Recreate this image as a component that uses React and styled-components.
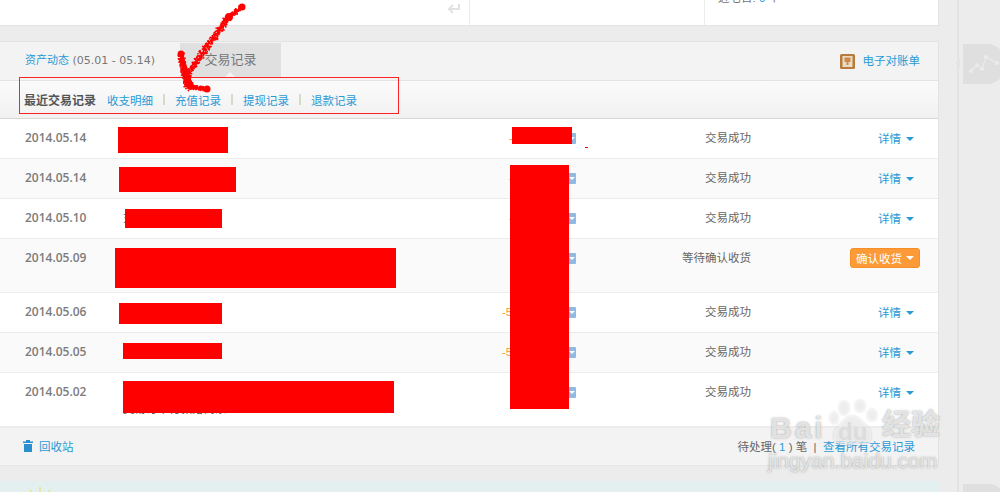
import React from 'react'
import styled, { createGlobalStyle } from 'styled-components'

const Global = createGlobalStyle`
html, body { margin: 0; padding: 0; background: #ececec; }
body { font: 11.5px "Liberation Sans", "Noto Sans CJK SC", sans-serif; color: #666; }
`
const Page = styled.div`
position: relative;
width: 1000px;
height: 492px;
overflow: hidden;
display: flex;
`
const Main = styled.div`
width: 939px;
flex: none;
display: flex;
flex-direction: column;
`
const Rail = styled.div`
position: relative;
margin-left: 18px;
flex: 1;
border-left: 2px solid #e3e3e3;
`
const RailTab = styled.div`
position: absolute;
left: 4px;
top: 44px;
width: 42px;
height: 40px;
background: #dfdfdf;
border-radius: 0 18px 18px 0;
&::before {
  content: "";
  position: absolute;
  left: -8px;
  top: 14px;
  border: 5px solid transparent;
  border-left: 0;
  border-right: 5px solid #e4e4e4;
}
`
const RailChart = styled.svg`
display: block;
margin-top: 8px;
`
const RailTabLow = styled.div`
position: absolute;
left: 4px;
top: 484px;
width: 40px;
height: 40px;
background: #dfdfdf;
border-radius: 0 14px 0 0;
`
const TopCard = styled.div`
height: 25px;
flex: none;
background: #fff;
border-bottom: 1px solid #e3e3e3;
border-right: 1px solid #e3e3e3;
display: flex;
overflow: hidden;
`
const TopCell = styled.div`
width: ${p => p.$w}px;
flex: none;
box-sizing: border-box;
display: flex;
justify-content: ${p => p.$end ? 'flex-end' : 'flex-start'};
padding: ${p => p.$end ? '3px 8px 0 0' : '0'};
border-right: ${p => p.$line ? '1px solid #ececec' : 'none'};
`
const ClippedNote = styled.div`
margin: -10px 0 0 13px;
line-height: 16px;
color: #777;
`
const Blue = styled.span`
color: #2a9ad6;
`
const Ledger = styled.div`
margin-top: 15px;
border-top: 1px solid #e3e3e3;
border-right: 1px solid #e3e3e3;
background: #fff;
`
const TabBar = styled.div`
height: 38px;
background: #f3f3f3;
border-bottom: 1px solid #e3e3e3;
display: flex;
align-items: flex-start;
padding-left: 25px;
position: relative;
`
const AssetLink = styled.div`
width: 155px;
line-height: 38px;
white-space: nowrap;
color: #777;
font-family: "DejaVu Sans", "Noto Sans CJK SC", sans-serif;
font-size: 11px;
`
const ActiveTab = styled.div`
position: relative;
margin-top: 1px;
width: 101px;
height: 34px;
background: #e0e0e0;
color: #777;
font-size: 13px;
line-height: 34px;
text-align: center;
&::after {
  content: "";
  position: absolute;
  left: 45px;
  bottom: 0;
  border: 5px solid transparent;
  border-top: 0;
  border-bottom: 5px solid #f3f3f3;
}
`
const Statement = styled.a`
margin-left: auto;
margin-right: 18px;
line-height: 38px;
color: #2a9ad6;
display: flex;
align-items: center;
gap: 8px;
`
const SubNav = styled.div`
height: 38px;
box-sizing: border-box;
background: linear-gradient(#fbfbfb, #f1f1f1);
border-bottom: 1px solid #d9d9d9;
display: flex;
align-items: center;
padding-left: 24px;
`
const SubTitle = styled.b`
font-size: 12px;
color: #555;
margin-right: 11px;
`
const SubLink = styled.a`
color: #2a9ad6;
`
const Bar = styled.i`
width: 2px;
height: 11px;
margin: 0 10px 0 10px;
background: #d3dbc9;
`
const Row = styled.div`
height: ${p => p.$tall ? 53 : 39}px;
background: ${p => p.$shade ? '#fafafa' : '#fff'};
border-bottom: 1px solid #ececec;
display: grid;
grid-template-columns: 98px 404px 74px 175px 1fr;
align-items: start;
&:last-of-type { border-bottom: 0; }
`
const DateCol = styled.div`
padding: 11px 0 0 25px;
font-family: "Open Sans", sans-serif;
font-size: 12px;
font-weight: 600;
color: #7c7c7c;
line-height: 16px;
white-space: nowrap;
`
const NameCol = styled.div`
padding: ${p => p.$low ? 28 : 11}px 0 0 25px;
line-height: 16px;
color: #555;
white-space: nowrap;
`
const AmountCol = styled.div`
padding-top: 11px;
display: flex;
justify-content: space-between;
align-items: center;
height: 16px;
color: #f29a2e;
`
const Amount = styled.span`
margin-left: ${p => p.$short ? 7 : 0}px;
`
const MoreBox = styled.span`
width: 8px;
height: 11px;
background: #90b9e3;
border-radius: 1px;
display: flex;
align-items: center;
justify-content: center;
&::after {
  content: "";
  border: 3px solid transparent;
  border-bottom: 0;
  border-top: 3px solid #fff;
}
`
const StatusCol = styled.div`
padding-top: 11px;
text-align: right;
line-height: 16px;
color: #666;
`
const ActionCol = styled.div`
display: flex;
justify-content: flex-end;
padding: 12px 24px 0 0;
`
const Details = styled.a`
color: #2a9ad6;
line-height: 16px;
display: flex;
align-items: center;
gap: 5px;
`
const Caret = styled.i`
border: 4px solid transparent;
border-bottom: 0;
border-top: 4px solid ${p => p.$color || '#2a9ad6'};
`
const ConfirmButton = styled.button`
margin: -3px -6px 0 0;
width: 70px;
height: 20px;
padding: 0;
background: #fb9a36;
border: 1px solid #f58f26;
border-radius: 3px;
color: #fff;
font: inherit;
display: flex;
align-items: center;
justify-content: center;
gap: 4px;
`
const Footer = styled.div`
height: 39px;
background: #f3f3f3;
border-top: 1px solid #ececec;
border-bottom: 1px solid #e6e6e6;
display: flex;
align-items: center;
padding: 0 23px 1px 23px;
box-sizing: border-box;
`
const Bin = styled.a`
color: #2a9ad6;
display: flex;
align-items: center;
gap: 6px;
`
const Pending = styled.div`
margin-left: auto;
color: #666;
white-space: pre;
`
const Band = styled.div`
margin-top: 15px;
height: 30px;
background: #e4efef;
position: relative;
`
const Sprout = styled.svg`
position: absolute;
left: 27px;
top: 4px;
`
const Overlay = styled.div`
position: absolute;
inset: 0;
pointer-events: none;
`
const Redact = styled.div`
position: absolute;
left: ${p => p.$x}px;
top: ${p => p.$y}px;
width: ${p => p.$w}px;
height: ${p => p.$h}px;
background: #f00;
`
const Outline = styled.div`
position: absolute;
left: 19px;
top: 77px;
width: 378px;
height: 35px;
border: 1px solid #f22;
`
const Scribble = styled.svg`
position: absolute;
left: 0;
top: 0;
`
const Mark = styled.div`
position: absolute;
left: 765px;
top: 400px;
width: 190px;
height: 72px;
color: rgba(255,255,255,.72);
text-shadow: 0 0 1px rgba(100,100,100,.55), 0 0 3px rgba(130,130,130,.35);
`
const MarkWord = styled.div`
position: absolute;
left: ${p => p.$x}px;
top: ${p => p.$y}px;
font: ${p => p.$weight || 'bold'} ${p => p.$size}px/1 "Liberation Sans", "Noto Sans CJK SC", sans-serif;
white-space: nowrap;
letter-spacing: ${p => p.$track || 0}px;
`
const Paw = styled.svg`
position: absolute;
left: 62px;
top: 0;
filter: drop-shadow(0 0 1px rgba(110,110,110,.5));
`
const PawWord = styled.div`
position: absolute;
left: 73px;
top: 20px;
font: bold 24px/1 "Liberation Sans", sans-serif;
color: #dcdcdc;
text-shadow: none;
`

const rows = [
  { date: '2014.05.14', status: '交易成功', amount: '-', short: true },
  { date: '2014.05.14', status: '交易成功', shade: true, amount: '-', short: true },
  { date: '2014.05.10', status: '交易成功', amount: '-', short: true, name: '充值' },
  { date: '2014.05.09', status: '等待确认收货', shade: true, tall: true, confirm: true },
  { date: '2014.05.06', status: '交易成功', amount: '-5' },
  { date: '2014.05.05', status: '交易成功', shade: true, amount: '-5' },
  { date: '2014.05.02', status: '交易成功', tall: true, name: '交易订单付款给商家', low: true },
]

const redactions = [
  [118, 127, 110, 26], [119, 167, 117, 25], [125, 209, 97, 19], [115, 248, 281, 40],
  [119, 303, 103, 21], [123, 343, 99, 16], [123, 381, 271, 32],
  [512, 127, 60, 17], [510, 165, 59, 244], [585, 147, 3, 1],
]

// spray of dots along a pen stroke, like the marker tool used on the screenshot
const spray = (x1, y1, x2, y2, width, seed) => {
  const dots = []
  const count = Math.round(Math.hypot(x2 - x1, y2 - y1) * 5)
  let n = seed
  const next = () => {
    n = (n * 16807) % 2147483647
    return (n % 1000) / 1000 - 0.5
  }
  for (let i = 0; i <= count; i++) {
    const t = i / count
    dots.push([x1 + (x2 - x1) * t + next() * width, y1 + (y2 - y1) * t + next() * width])
  }
  return dots
}

const strokes = [
  ...spray(242, 7, 229, 17, 4, 11),
  ...spray(229, 17, 210, 43, 6, 23),
  ...spray(210, 43, 197, 60, 6, 37),
  ...spray(197, 60, 186, 76, 5, 41),
  ...spray(181, 54, 185, 78, 6, 53),
  ...spray(185, 70, 189, 87, 8, 67),
  ...spray(189, 87, 206, 89, 4, 71),
]

const App = () => {
  return (
    <Page>
      <Global />
      <Main>
        <TopCard>
          <TopCell $w={470} $end $line>
            <svg width="14" height="11" viewBox="0 0 14 11" fill="none" stroke="#e2e2e2" strokeWidth="2">
              <path d="M12 1v5H3M6 2L2 6l4 4" />
            </svg>
          </TopCell>
          <TopCell $w={235} $line />
          <TopCell $w={230}>
            <ClippedNote>近七日: <Blue>0</Blue> 个</ClippedNote>
          </TopCell>
        </TopCard>
        <Ledger>
          <TabBar>
            <AssetLink><Blue>资产动态</Blue> (05.01 - 05.14)</AssetLink>
            <ActiveTab>交易记录</ActiveTab>
            <Statement>
              <svg width="15" height="15" viewBox="0 0 15 15">
                <rect width="15" height="15" rx="1.5" fill="#b77b3c" />
                <rect x="2.5" y="2" width="10" height="11" fill="#eddcc4" />
                <path d="M4.5 3.5h6v4.5h-2v3h-2v-3h-2z" fill="#c98a4c" />
              </svg>
              电子对账单
            </Statement>
          </TabBar>
          <SubNav>
            <SubTitle>最近交易记录</SubTitle>
            <SubLink>收支明细</SubLink><Bar />
            <SubLink>充值记录</SubLink><Bar />
            <SubLink>提现记录</SubLink><Bar />
            <SubLink>退款记录</SubLink>
          </SubNav>
          {rows.map((r, i) => (
            <Row key={i} $shade={r.shade} $tall={r.tall}>
              <DateCol>{r.date}</DateCol>
              <NameCol $low={r.low}>{r.name}</NameCol>
              <AmountCol>
                <Amount $short={r.short}>{r.amount}</Amount>
                <MoreBox />
              </AmountCol>
              <StatusCol>{r.status}</StatusCol>
              <ActionCol>
                {r.confirm
                  ? <ConfirmButton>确认收货 <Caret $color="#fff" /></ConfirmButton>
                  : <Details>详情 <Caret /></Details>}
              </ActionCol>
            </Row>
          ))}
          <Footer>
            <Bin>
              <svg width="10" height="12" viewBox="0 0 10 12">
                <path d="M3 0h4v1.5h3V3H0V1.5h3zM1 4h8v8H1z" fill="#2a8fcf" />
              </svg>
              回收站
            </Bin>
            <Pending>待处理( <Blue>1</Blue> ) 笔  |  <Blue>查看所有交易记录</Blue></Pending>
          </Footer>
        </Ledger>
        <Band>
          <Sprout width="30" height="12" viewBox="0 0 30 12" fill="none" stroke="#e6e58a" strokeWidth="1.5">
            <path d="M13 12V2M8 12L3 5M18 12l5-7M4 12L0 9M22 12l4-3" />
          </Sprout>
        </Band>
      </Main>
      <Rail>
        <RailTab>
          <RailChart width="36" height="24" viewBox="0 0 36 24" fill="none" stroke="#ebebeb" strokeWidth="1.2">
            <path d="M8 19l6-6 5 4 4-12 11 6" />
            <circle cx="8" cy="19" r="1.5" fill="#ebebeb" />
            <circle cx="14" cy="13" r="1.5" fill="#ebebeb" />
            <circle cx="19" cy="17" r="1.5" fill="#ebebeb" />
            <circle cx="23" cy="5" r="1.5" fill="#ebebeb" />
            <circle cx="34" cy="11" r="1.5" fill="#ebebeb" />
          </RailChart>
        </RailTab>
        <RailTabLow />
      </Rail>
      <Overlay>
        {redactions.map(([x, y, w, h], i) => <Redact key={i} $x={x} $y={y} $w={w} $h={h} />)}
        <Outline />
        <Scribble width="300" height="110" viewBox="0 0 300 110" fill="#f00">
          {strokes.map(([x, y], i) => <circle key={i} cx={x} cy={y} r="0.9" />)}
          <circle cx="242" cy="7" r="3.5" />
          <circle cx="229" cy="17" r="4" />
          <circle cx="181" cy="54" r="3.5" />
          <circle cx="207" cy="89" r="3.5" />
          <path d="M182 60L187 86L192 87L184 62z" stroke="#f00" strokeWidth="3" />
        </Scribble>
        <Mark>
          <MarkWord $x={5} $y={13} $size={30} $track={3}>Bai</MarkWord>
          <Paw width="54" height="48" viewBox="0 0 54 48" fill="rgba(255,255,255,.55)">
            <ellipse cx="17" cy="8" rx="5" ry="7" />
            <ellipse cx="33" cy="6" rx="5" ry="6" />
            <ellipse cx="45" cy="15" rx="5" ry="6" />
            <ellipse cx="7" cy="18" rx="4" ry="6" />
            <path d="M25 16c6 0 9 4 14 9 9 8 6 20-5 20H17C6 45 3 34 11 26c5-4 8-10 14-10z" />
          </Paw>
          <PawWord>du</PawWord>
          <MarkWord $x={117} $y={11} $size={29}>经验</MarkWord>
          <MarkWord $x={3} $y={50} $size={21} $weight="normal">jingyan.baidu.com</MarkWord>
        </Mark>
      </Overlay>
    </Page>
  )
}

export default App
